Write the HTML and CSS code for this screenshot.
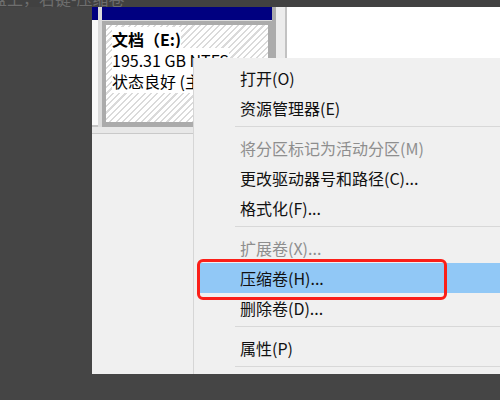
FILE: index.html
```html
<!DOCTYPE html>
<html lang="zh-CN">
<head>
    <meta charset="UTF-8">
    <meta name="viewport" content="width=device-width, initial-scale=1.0">
    <title>压缩卷</title>
    <link rel="stylesheet" href="styles.css">
</head>
<body>
    <div class="caption"><span>盘上，右键-压缩卷</span></div>
    <div class="window">
        <div class="disks">
            <div class="disk-label"><div class="bar"></div></div>
            <div class="volume">
                <div class="bar"></div>
                <div class="volume-body">
                    <div class="volume-line"><b>文档（E:)</b></div>
                    <div class="volume-line"><span>195.31 GB NTFS</span></div>
                    <div class="volume-line"><span>状态良好 (主分区)</span></div>
                </div>
            </div>
            <div class="scroll"></div>
            <div class="blank"></div>
        </div>
        <div class="lower"></div>

        <ul class="menu">
            <li class="item">打开(O)</li>
            <li class="item">资源管理器(E)</li>
            <li class="sep"></li>
            <li class="item disabled">将分区标记为活动分区(M)</li>
            <li class="item">更改驱动器号和路径(C)...</li>
            <li class="item">格式化(F)...</li>
            <li class="sep"></li>
            <li class="item disabled">扩展卷(X)...</li>
            <li class="item active">压缩卷(H)...</li>
            <li class="item">删除卷(D)...</li>
            <li class="sep"></li>
            <li class="item">属性(P)</li>
            <li class="sep"></li>
        </ul>
        <div class="mark"></div>
    </div>
</body>
</html>
```

FILE: styles.css
```css
body {
    margin: 0;
    width: 500px;
    height: 400px;
    overflow: hidden;
    background: #454545;
    font-family: "Noto Sans CJK SC", sans-serif;
}
.caption {
    height: 7px;
    overflow: hidden;
    color: #6e6e6e;
    font-size: 16px;
    line-height: 16px;
    background: #414141;
}
.caption span {
    display: block;
    margin-top: -10px;
    margin-left: -9px;
}
.window {
    position: relative;
    margin-left: 92px;
    height: 367px;
    background: #f0f0f0;
}
.disks {
    display: flex;
    height: 120px;
    background: #dcdcdc;
}
.bar {
    height: 13px;
    background: #000080;
}
.disk-label {
    width: 6px;
    height: 118px;
    background: #fafafa;
    border-bottom: 2px solid #c4c4c4;
}
.volume {
    width: 170px;
    margin-left: 4px;
}
.volume-body {
    height: 97px;
    margin-top: 1px;
    border: 4px solid #ababab;
    border-bottom-width: 5px;
    background: repeating-linear-gradient(135deg, #ffffff 0 3px, #dadada 3px 4.5px);
    padding: 0 0 0 6px;
}
.volume-line {
    font-size: 16px;
    line-height: 21px;
    color: #000;
    white-space: nowrap;
}
.volume-line:first-child {
    margin-top: 4px;
}
.volume-line b,
.volume-line span {
    background: #fff;
}
.scroll {
    width: 9px;
    background: #ececec;
    border-left: 4px solid #ababab;
    border-right: 2px solid #c2c2c2;
}
.blank {
    flex: 1;
    background: #fff;
}
.lower {
    height: 6px;
    background: #e8e8e8;
    border-bottom: 1px solid #c9c9c9;
}
.menu {
    position: absolute;
    left: 101px;
    top: 51px;
    right: 0;
    bottom: 0;
    margin: 0;
    padding: 5px 0 0;
    list-style: none;
    background: #f0f0f0;
    border-left: 1px solid #d6d6d6;
    font-size: 16px;
    color: #111;
}
.item {
    height: 30px;
    line-height: 31px;
    padding-left: 46px;
    white-space: nowrap;
}
.item.disabled {
    color: #8e8e8e;
}
.item.active {
    margin-left: 6px;
    padding-left: 40px;
    background: #91c8f6;
}
.sep {
    height: 10px;
    margin-left: 41px;
    box-sizing: border-box;
    border-top: 3px solid transparent;
    background: linear-gradient(#d8d8d8, #d8d8d8) top / 100% 1px no-repeat;
    background-clip: padding-box;
}
.mark {
    position: absolute;
    left: 105px;
    top: 252px;
    width: 250px;
    height: 41px;
    box-sizing: border-box;
    border: 3px solid #fb1f19;
    border-radius: 6px;
}
```
